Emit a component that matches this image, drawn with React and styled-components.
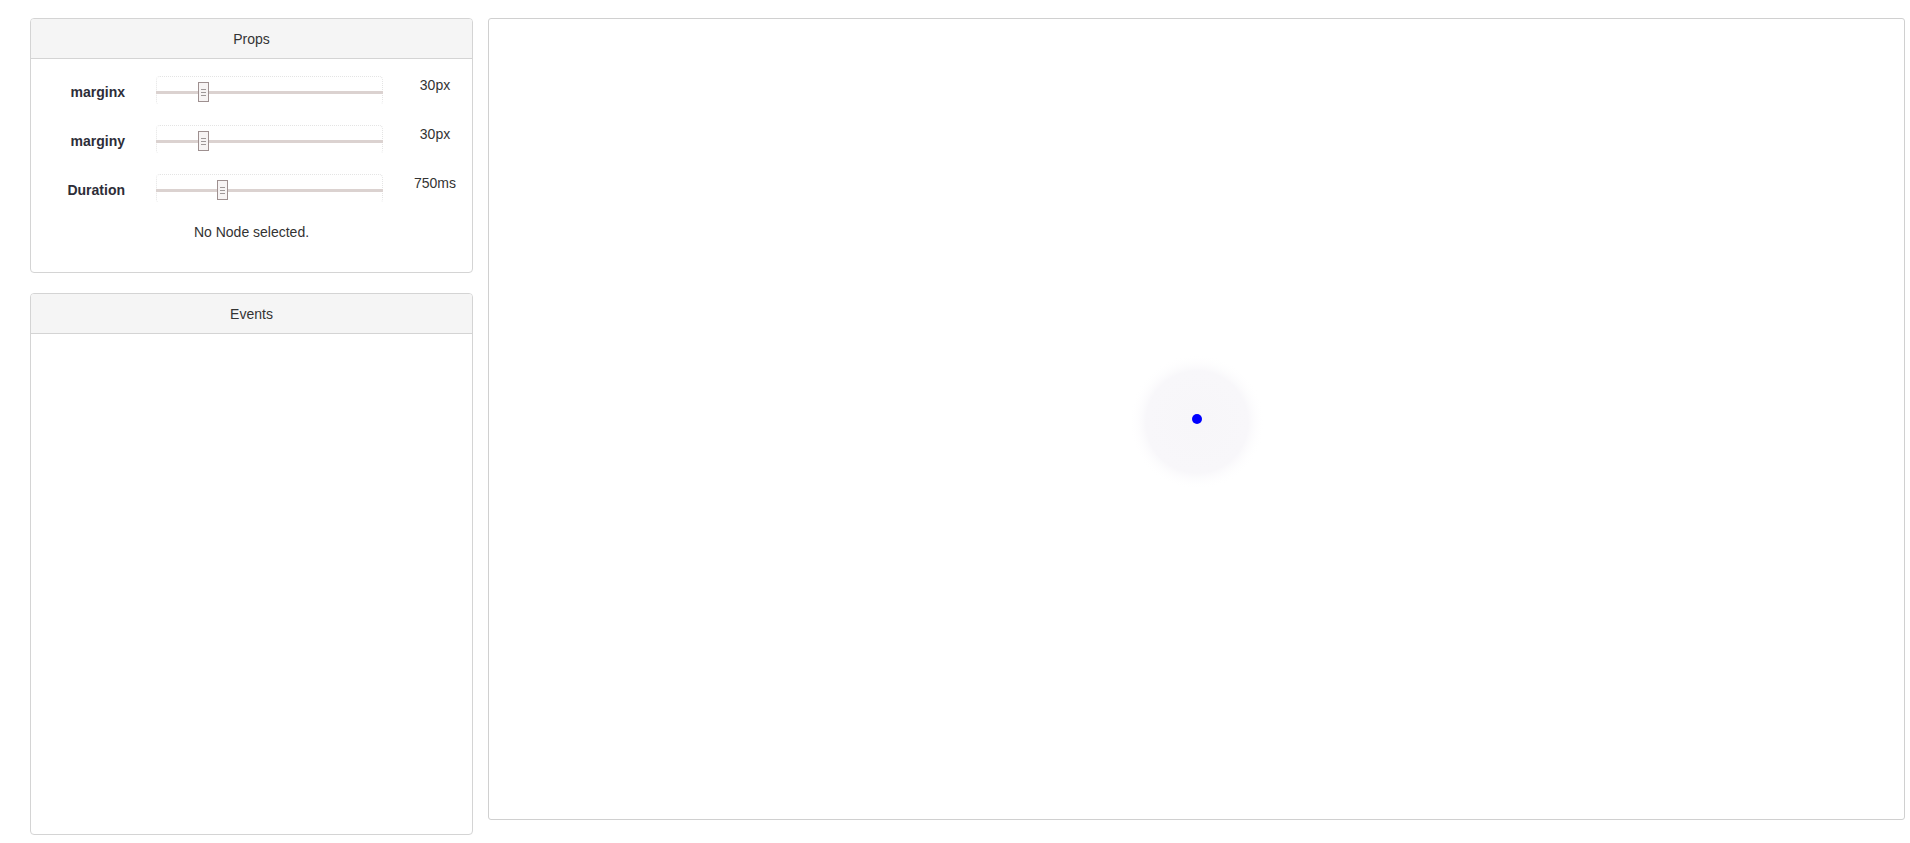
import React from 'react'
import styled, { createGlobalStyle } from "styled-components";

const GlobalStyle = createGlobalStyle`
  html, body {
    margin: 0;
    padding: 0;
    background: #fff;
  }
  body {
    font-family: "Liberation Sans", Arial, sans-serif;
    font-size: 14px;
    line-height: 20px;
    color: #333;
  }
`;

const Page = styled.div`
  display: flex;
  flex-direction: row;
  align-items: flex-start;
  gap: 15px;
  padding: 18px 5px 0 30px;
  height: 843px;
  box-sizing: border-box;
`;

const SideColumn = styled.div`
  display: flex;
  flex-direction: column;
  gap: 20px;
  width: 443px;
  flex-shrink: 0;
`;

const Panel = styled.div`
  border: 1px solid #d4d4d4;
  border-radius: 4px;
  background: #fff;
  height: ${(p) => p.$height}px;
  box-sizing: border-box;
  display: flex;
  flex-direction: column;
`;

const PanelHeading = styled.div`
  background: #f5f5f5;
  border-bottom: 1px solid #d4d4d4;
  border-radius: 3px 3px 0 0;
  padding: 10px 15px 9px;
  text-align: center;
  color: #333;
`;

const PropsBody = styled.div`
  padding: 17px 0 0;
  display: flex;
  flex-direction: column;
  gap: 20px;
`;

const PropRow = styled.div`
  display: grid;
  grid-template-columns: 94px 258px 89px;
  align-items: start;
`;

const PropLabel = styled.div`
  text-align: right;
  font-weight: bold;
  color: #2d2d38;
  padding-top: 6px;
`;

const SliderBox = styled.div`
  position: relative;
  margin-left: 31px;
  height: 29px;
  border: 1px dotted #e4e4e4;
  border-bottom-color: transparent;
  border-radius: 4px;
  box-sizing: border-box;
`;

const SliderTrack = styled.div`
  position: absolute;
  left: -1px;
  right: -1px;
  top: 14px;
  height: 3px;
  background: #dbd2d0;
`;

const SliderHandle = styled.div`
  position: absolute;
  top: 5px;
  width: 11px;
  height: 20px;
  box-sizing: border-box;
  border: 1px solid #9e9090;
  background: #f7f4f4;
  display: flex;
  flex-direction: column;
  align-items: center;
  justify-content: center;
  gap: 2px;
`;

const Grip = styled.span`
  display: block;
  width: 5px;
  height: 1px;
  background: #9e9898;
`;

const PropValue = styled.div`
  margin-left: 15px;
  margin-top: -1px;
  text-align: center;
  color: #333;
`;

const Notice = styled.div`
  text-align: center;
  margin-top: -1px;
  color: #333;
`;

const Canvas = styled.div`
  flex: 1;
  height: 802px;
  border: 1px solid #d0d0d0;
  border-radius: 3px;
  box-sizing: border-box;
  display: flex;
  align-items: center;
  justify-content: center;
`;

const props = [
  { name: 'marginx', value: '30px', pct: 0.194 },
  { name: 'marginy', value: '30px', pct: 0.194 },
  { name: 'Duration', value: '750ms', pct: 0.282 },
];

const Slider = ({ pct }) => (
  <SliderBox>
    <SliderTrack />
    <SliderHandle style={{ left: `${Math.round(pct * 216) - 1}px` }}>
      <Grip />
      <Grip />
      <Grip />
    </SliderHandle>
  </SliderBox>
);

const NodeGraph = () => (
  <svg width="160" height="160" viewBox="0 0 160 160">
    <defs>
      <radialGradient id="halo" cx="50%" cy="50%" r="50%">
        <stop offset="0%" stopColor="#f7f6f9" />
        <stop offset="75%" stopColor="#f8f7fa" />
        <stop offset="100%" stopColor="#ffffff" stopOpacity="0" />
      </radialGradient>
    </defs>
    <circle cx="80" cy="83" r="68" fill="url(#halo)" />
    <circle cx="80" cy="80" r="5" fill="#0000ff" />
  </svg>
);

const App = () => {
  return (
    <>
      <GlobalStyle />
      <Page>
        <SideColumn>
          <Panel $height={255}>
            <PanelHeading>Props</PanelHeading>
            <PropsBody>
              {props.map((p) => (
                <PropRow key={p.name}>
                  <PropLabel>{p.name}</PropLabel>
                  <Slider pct={p.pct} />
                  <PropValue>{p.value}</PropValue>
                </PropRow>
              ))}
              <Notice>No Node selected.</Notice>
            </PropsBody>
          </Panel>
          <Panel $height={542}>
            <PanelHeading>Events</PanelHeading>
          </Panel>
        </SideColumn>
        <Canvas>
          <NodeGraph />
        </Canvas>
      </Page>
    </>
  )
}

export default App;
